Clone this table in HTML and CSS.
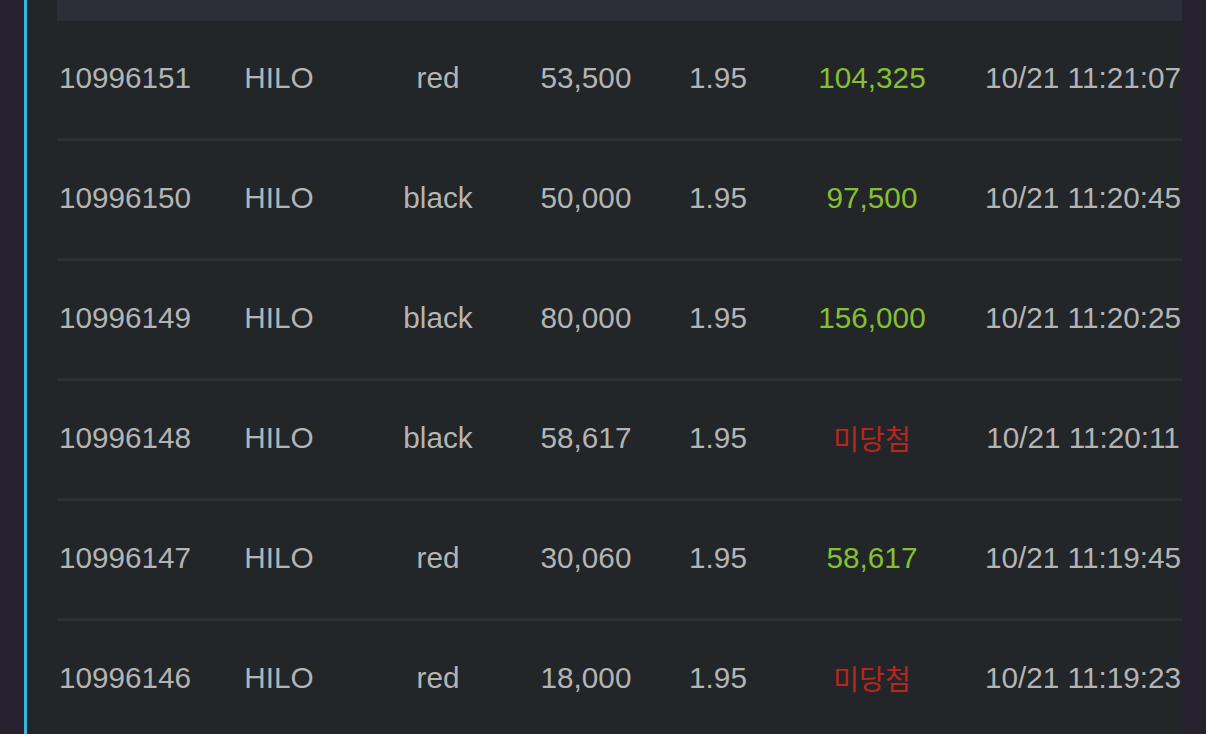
FILE: index.html
```html
<!DOCTYPE html>
<html lang="ko">
<head>
<meta charset="utf-8">
<title>Bet history</title>
<link rel="stylesheet" href="styles.css">
</head>
<body>
<div class="page">
  <div class="panel">
    <div class="table">
      <div class="head"></div>
      <div class="row"><span>10996151</span><span>HILO</span><span>red</span><span>53,500</span><span>1.95</span><span class="win">104,325</span><span>10/21 11:21:07</span></div>
      <div class="row"><span>10996150</span><span>HILO</span><span>black</span><span>50,000</span><span>1.95</span><span class="win">97,500</span><span>10/21 11:20:45</span></div>
      <div class="row"><span>10996149</span><span>HILO</span><span>black</span><span>80,000</span><span>1.95</span><span class="win">156,000</span><span>10/21 11:20:25</span></div>
      <div class="row"><span>10996148</span><span>HILO</span><span>black</span><span>58,617</span><span>1.95</span><span class="lose">미당첨</span><span>10/21 11:20:11</span></div>
      <div class="row"><span>10996147</span><span>HILO</span><span>red</span><span>30,060</span><span>1.95</span><span class="win">58,617</span><span>10/21 11:19:45</span></div>
      <div class="row"><span>10996146</span><span>HILO</span><span>red</span><span>18,000</span><span>1.95</span><span class="lose">미당첨</span><span>10/21 11:19:23</span></div>
    </div>
  </div>
</div>
</body>
</html>
```

FILE: styles.css
```css
html, body {
  margin: 0;
  padding: 0;
  background: #25212e;
  height: 100%;
  overflow: hidden;
}

.page {
  display: flex;
  height: 734px;
  padding: 0 24px;
}

.panel {
  flex: 1;
  background: #222629;
  border-left: 3px solid #3ab4e2;
  padding-left: 30px;
  overflow: hidden;
}

.table {
  width: 1140px;
  font-family: "Liberation Sans", Arial, "Noto Sans CJK KR", sans-serif;
  font-size: 29.7px;
  color: #b4b4b4;
}

.head {
  height: 21px;
  background: #2c2f37;
}

.row {
  display: grid;
  grid-template-columns: 136px 172px 146px 150px 114px 194px 228px;
  align-items: center;
  height: 120px;
  box-sizing: border-box;
  padding-bottom: 3px;
  border-bottom: 3px solid #2c2f34;
}

.row span {
  text-align: center;
  white-space: nowrap;
}

.row .win {
  color: #85c030;
}

.row .lose {
  color: #b8261f;
  font-family: "Noto Sans CJK KR", sans-serif;
  font-size: 28px;
}
```
